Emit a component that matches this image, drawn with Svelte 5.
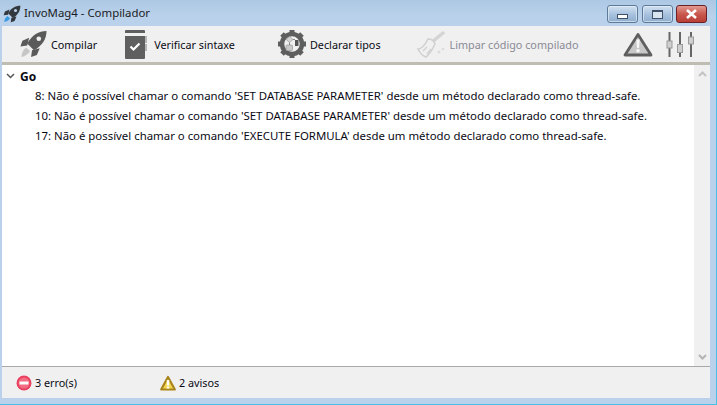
<script lang="ts">
	const messages = [
		"8: Não é possível chamar o comando 'SET DATABASE PARAMETER' desde um método declarado como thread-safe.",
		"10: Não é possível chamar o comando 'SET DATABASE PARAMETER' desde um método declarado como thread-safe.",
		"17: Não é possível chamar o comando 'EXECUTE FORMULA' desde um método declarado como thread-safe."
	];
</script>

<main class="window">
	<header class="titlebar">
		<svg class="title-icon" width="18" height="18" viewBox="0 0 28 28">
			<path d="M27 1c-8 0-15 4-19 12l7 7c8-4 12-11 12-19z" fill="#33383f" />
			<path d="M10 7l-7 3-2 6 7-1zM21 18l-3 7-6 2 1-7z" fill="#33383f" />
			<circle cx="19.500" cy="8.500" r="2.400" fill="#b9d1ea" />
			<path d="M7 17l4 4c-2 3-5 5-9 5 0-4 2-7 5-9z" fill="#3b9be0" />
		</svg>
		<span class="title">InvoMag4 - Compilador</span>
		<div class="window-buttons">
			<div class="wbtn"><i class="min-glyph"></i></div>
			<div class="wbtn"><i class="max-glyph"></i></div>
			<div class="wbtn close">
				<svg width="13" height="10" viewBox="0 0 13 10">
					<path d="M2 1l9 8M11 1l-9 8" stroke="#fff" stroke-width="2.6" fill="none" />
				</svg>
			</div>
		</div>
	</header>

	<nav class="toolbar">
		<div class="tool compile">
			<svg width="28" height="27" viewBox="0 0 28 28">
				<path d="M28 0c-8 0-15 4-20 13l7 7c9-5 13-12 13-20z" fill="#5a5a5a" />
				<path d="M10 7l-7 3-2 6 7-1zM21 18l-3 7-6 2 1-7z" fill="#5a5a5a" />
				<circle cx="20" cy="8" r="2.400" fill="#f0f0f0" />
				<path d="M7 17l4 4c-2 3-5 5-9 6 0-4 2-8 5-10z" fill="#c6c6c6" />
			</svg>
			<span>Compilar</span>
		</div>
		<div class="tool check">
			<svg width="22" height="29" viewBox="0 0 22 29">
				<rect x="0" y="0" width="20" height="29" rx="1" fill="#5f5f5f" />
				<rect x="0" y="3" width="20" height="3" fill="#f0f0f0" />
				<rect x="20" y="6" width="2" height="7" fill="#b5b5b5" />
				<rect x="20" y="14" width="2" height="7" fill="#b5b5b5" />
				<path d="M5.500 16.500l3 3 6-6" stroke="#fff" stroke-width="2.200" fill="none" />
			</svg>
			<span>Verificar sintaxe</span>
		</div>
		<div class="tool types">
			<svg width="30" height="30" viewBox="0 0 30 30">
				<circle cx="15" cy="15" r="10" fill="#f0f0f0" stroke="#5e5e5e" stroke-width="4.500" />
				<path
					d="M15 1v5M15 24v5M1 15h5M24 15h5M5 5l4 4M21 21l4 4M25 5l-4 4M9 21l-4 4"
					stroke="#5e5e5e"
					stroke-width="5"
				/>
				<path d="M12.500 7.500l3.500 3-3.500 3-3.500-3z" fill="#d2d2d2" stroke="#9a9a9a" stroke-width=".7" />
				<rect x="9" y="16" width="6.500" height="5.500" rx="1" fill="#c8c8c8" stroke="#9a9a9a" stroke-width=".7" />
				<rect x="18" y="11" width="3.500" height="6" fill="#555" />
				<path d="M12.500 13.500v2.500M16 10.500h2" stroke="#888" />
			</svg>
			<span>Declarar tipos</span>
		</div>
		<div class="tool clean">
			<svg width="28" height="27" viewBox="0 0 28 27">
				<path d="M15 11L26 2" stroke="#d4d4d4" stroke-width="3.500" stroke-linecap="round" />
				<path
					d="M11 8c3 0 6 2 7 5l-1 2c-2 4-4 8-8 11-3-1-6-4-8-8 4 0 7-4 10-10z"
					fill="#f0f0f0"
					stroke="#d0d0d0"
					stroke-width="1.600"
				/>
				<path d="M6 20l4-4M10 23l4-5" stroke="#d0d0d0" stroke-width="1.300" />
				<circle cx="22" cy="21" r="1.600" fill="#dcdcdc" />
				<circle cx="26" cy="18" r="1.300" fill="#dcdcdc" />
			</svg>
			<span>Limpar código compilado</span>
		</div>
		<svg class="warn-tool" width="30" height="25" viewBox="0 0 30 25">
			<path d="M15 2.500L28 23H2z" fill="#c8c8c8" stroke="#5e5e5e" stroke-width="2.800" stroke-linejoin="round" />
			<path d="M13.300 7.500h3.400l-.7 8.500h-2z" fill="#f6f6f6" />
			<circle cx="15" cy="18.800" r="1.800" fill="#f6f6f6" />
		</svg>
		<svg class="sliders" width="29" height="25" viewBox="0 0 29 25">
			<path d="M3.500 0v25M14 0v25M25 0v25" stroke="#666" stroke-width="2" />
			<rect x="1" y="9" width="5" height="7" fill="#cfcfcf" stroke="#9a9a9a" />
			<rect x="11.500" y="12.500" width="5" height="8" fill="#cfcfcf" stroke="#9a9a9a" />
			<rect x="22.500" y="5" width="5" height="7" fill="#cfcfcf" stroke="#9a9a9a" />
		</svg>
	</nav>

	<section class="body">
		<div class="results">
			<div class="group">
				<svg width="9" height="6" viewBox="0 0 9 6">
					<path d="M1 1l3.500 3.500L8 1" stroke="#555" stroke-width="1.500" fill="none" />
				</svg>
				<strong>Go</strong>
			</div>
			{#each messages as message}
				<p>{message}</p>
			{/each}
		</div>
		<div class="scrollbar">
			<svg width="9" height="6" viewBox="0 0 9 6">
				<path d="M1 5l3.500-3.500L8 5" stroke="#c4c4c4" stroke-width="2" fill="none" />
			</svg>
			<svg width="9" height="6" viewBox="0 0 9 6">
				<path d="M1 1l3.500 3.500L8 1" stroke="#b4b4b4" stroke-width="2" fill="none" />
			</svg>
		</div>
	</section>

	<footer class="status">
		<div class="stat errors">
			<svg width="16" height="16" viewBox="0 0 16 16">
				<circle cx="8" cy="8" r="7.500" fill="#e9405f" />
				<circle cx="8" cy="8" r="5.500" fill="#f26d84" />
				<rect x="3.500" y="6.500" width="9" height="3" fill="#fff" />
			</svg>
			<span>3 erro(s)</span>
		</div>
		<div class="stat warnings">
			<svg width="16" height="16" viewBox="0 0 16 16">
				<path d="M8 2L14.800 14.500H1.200z" fill="#f4d750" stroke="#a9851f" stroke-width="2.200" stroke-linejoin="round" />
				<rect x="6.800" y="5" width="2.400" height="5.500" fill="#fff" />
				<rect x="6.800" y="11.500" width="2.400" height="2" fill="#fff" />
			</svg>
			<span>2 avisos</span>
		</div>
	</footer>
</main>

<style>
	:global(body) {
		margin: 0;
	}

	.window {
		display: flex;
		flex-direction: column;
		box-sizing: border-box;
		width: 717px;
		height: 405px;
		overflow: hidden;
		border-right: 1px solid #4cc0e4;
		border-bottom: 1px solid #4cc0e4;
		background: #b9d1ea;
		padding: 0 6px 6px 2px;
		color: #0a0a14;
		font-family: 'Noto Sans', sans-serif;
		font-size: 11.4px;
	}

	.titlebar {
		display: flex;
		flex: none;
		align-items: flex-start;
		height: 26px;
		margin: 0 -6px 0 -2px;
		background: linear-gradient(#adc8e4, #b9d1ea 60%);
		padding: 0 9px 0 3px;
	}

	.title-icon {
		margin-top: 5px;
	}

	.title {
		margin: 4px 0 0 3px;
		color: #1a1a24;
		line-height: 17px;
	}

	.window-buttons {
		display: flex;
		gap: 3.5px;
		margin: 5px 0 0 auto;
	}

	.wbtn {
		display: grid;
		box-sizing: border-box;
		width: 31px;
		height: 18px;
		place-items: center;
		border: 1px solid #5d7a99;
		border-radius: 3px;
		background: linear-gradient(#d3e2f1, #a9c3df 50%, #8fadce);
		box-shadow: inset 0 0 0 1px #e4eef8aa;
	}

	.wbtn.close {
		border-color: #6b2026;
		background: linear-gradient(#e29a92, #c9584e 50%, #b83f36);
		box-shadow: none;
	}

	.min-glyph {
		display: block;
		box-sizing: border-box;
		width: 11px;
		height: 5px;
		margin-top: 4px;
		border: 1px solid #3f5068;
		background: #fff;
	}

	.max-glyph {
		display: block;
		box-sizing: border-box;
		width: 11px;
		height: 9px;
		border: 1px solid #3f5068;
		border-top-width: 2px;
		background: #d8e4f0;
	}

	.toolbar {
		display: flex;
		flex: none;
		align-items: center;
		height: 36px;
		border-bottom: 3px solid #bfbcb2;
		background: #f0f0f0;
		font-size: 10.8px;
	}

	.tool {
		display: flex;
		flex: none;
		align-items: center;
		white-space: nowrap;
	}

	.compile {
		gap: 4px;
		margin-left: 17px;
	}

	.check {
		gap: 7px;
		margin-left: 28px;
	}

	.types {
		gap: 3px;
		margin-left: 42px;
	}

	.clean {
		gap: 5px;
		margin-left: 36px;
		color: #8a8a96;
	}

	.warn-tool {
		margin-left: auto;
	}

	.sliders {
		margin: 0 15px 0 13px;
	}

	.body {
		display: flex;
		flex: 1;
		min-height: 0;
		background: #fff;
	}

	.results {
		flex: 1;
		min-width: 0;
		padding-top: 1px;
	}

	.group {
		display: flex;
		align-items: center;
		gap: 7px;
		height: 20px;
		padding-left: 4px;
	}

	.group strong {
		margin-left: -2px;
		font-size: 12px;
		font-weight: 700;
	}

	p {
		margin: 0;
		padding-left: 33px;
		line-height: 20px;
	}

	.scrollbar {
		display: flex;
		flex: none;
		flex-direction: column;
		align-items: center;
		justify-content: space-between;
		box-sizing: border-box;
		width: 16px;
		background: #f0f0f0;
		padding: 6px 0;
	}

	.status {
		display: flex;
		flex: none;
		align-items: center;
		height: 32px;
		border-top: 1px solid #a9a9a9;
		box-sizing: border-box;
		background: #f0f0f0;
		font-size: 10.8px;
	}

	.stat {
		display: flex;
		align-items: center;
		gap: 3px;
	}

	.errors {
		margin-left: 14px;
		width: 144px;
	}
</style>
